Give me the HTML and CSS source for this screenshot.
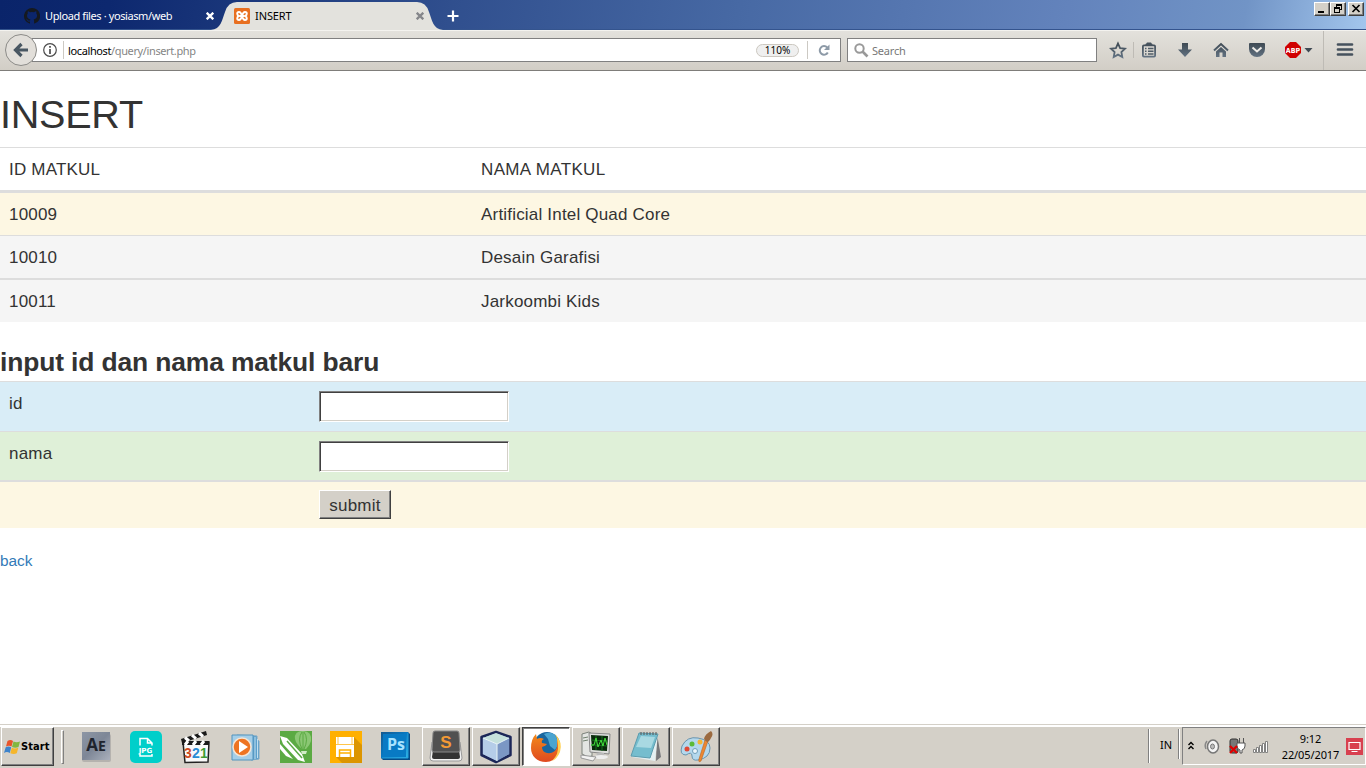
FILE: index.html
```html
<!DOCTYPE html>
<html lang="id">
<head>
<meta charset="utf-8">
<title>INSERT</title>
<link rel="stylesheet" href="styles.css">
</head>
<body>
<header class="titlebar">
  <div class="tab tab-idle">
    <svg class="fav" width="16" height="16" viewBox="0 0 16 16"><path fill="#15191f" d="M8 0a8 8 0 0 0-2.500 15.600c.4 0 .5-.2.5-.4v-1.600c-2 .4-2.600-.7-2.800-1.300-.4-.8-.6-.9-.9-1.100-.5-.3 0-.5.4-.3.5.1.9.8 1.100 1.100.6.9 1.500.7 2.200.5.1-.5.3-.8.5-1C4.600 11.200 3 10.300 3 7.600c0-.9.3-1.600.8-2.200-.2-.6-.2-1.300.1-2.100.7 0 1.500.4 2.100.9a8 8 0 0 1 4 0c.8-.5 1.500-.9 2.200-.9.3.8.2 1.500.1 2.100.5.6.8 1.300.8 2.200 0 2.700-1.700 3.600-3.500 3.900.4.4.5.9.5 1.500v2.200c0 .2.100.500.500.400A8 8 0 0 0 8 0z"/></svg>
    <span class="tab-name name-idle">Upload files · yosiasm/web</span>
    <svg class="tab-x" width="8" height="8" viewBox="0 0 8 8"><path d="M.7.7l6.600 6.600M7.300.7L.7 7.300" stroke="#fff" stroke-width="2.300"/></svg>
  </div>
  <div class="tab tab-active">
    <svg class="tab-shape" width="228" height="30" viewBox="0 0 228 30"><path d="M-4 30C6 29 7 20 10 12Q13 2 22 2H202Q211 2 214 12C217 20 218 29 228 30z" fill="#e3e2dd"/></svg>
    <svg class="fav2" width="16" height="16" viewBox="0 0 16 16"><rect width="16" height="16" rx="1.500" fill="#e86f20"/><path d="M5 4Q3.200 4 3.200 5.700T5 8Q3.200 8.600 3.200 10.300T5 12Q7 12 8 8Q9 4 11 4Q12.800 4 12.800 5.700T11 8Q12.800 8.600 12.800 10.300T11 12Q9 12 8 8Q7 4 5 4z" fill="none" stroke="#fff" stroke-width="1.900"/><path d="M6 8h4" stroke="#fff" stroke-width="2"/></svg>
    <span class="tab-name name-active">INSERT</span>
    <svg class="tab-x" width="8" height="8" viewBox="0 0 8 8"><path d="M.7.7l6.600 6.600M7.300.7L.7 7.300" stroke="#85868a" stroke-width="2.300"/></svg>
  </div>
  <svg class="newtab" width="12" height="12" viewBox="0 0 12 12"><path d="M6 .5v11M.5 6h11" stroke="#fff" stroke-width="2.200"/></svg>
  <div class="winbtns">
    <span class="wb"><svg width="14" height="12"><path d="M3 9h6" stroke="#000" stroke-width="2"/></svg></span>
    <span class="wb"><svg width="14" height="12" shape-rendering="crispEdges"><path d="M5 1h6v2H5zM5 3h1v2H5zM10 3h1v4h-1zM9 6h1v1H9zM3 4h6v2H3zM3 6h1v4H3zM8 6h1v4H8zM3 9h6v1H3z" fill="#000"/></svg></span>
    <span class="wb wb-close"><svg width="14" height="12"><path d="M3.500 2l7 7M10.500 2l-7 7" stroke="#000" stroke-width="1.700"/></svg></span>
  </div>
</header>

<nav class="toolbar">
  <div class="back-btn"><svg width="16" height="16" viewBox="0 0 16 16"><path d="M8.500 2L2.500 8l6 6M3 8h12" fill="none" stroke="#495762" stroke-width="3.200"/></svg></div>
  <div class="urlbar">
    <svg class="info" width="14" height="14" viewBox="0 0 14 14"><circle cx="7" cy="7" r="6.300" fill="none" stroke="#4b4b4b" stroke-width="1.200"/><path d="M7 6v5M7 3v1.800" stroke="#4b4b4b" stroke-width="1.700"/></svg>
    <span class="url-sep"></span>
    <span class="url"><span class="host">localhost</span>/query/insert.php</span>
    <span class="zoom">110%</span>
    <span class="reload-sep"></span>
    <svg class="reload" width="12" height="13" viewBox="0 0 12 13"><path d="M9.200 3.500A4.300 4.300 0 1 0 9.800 8.500" fill="none" stroke="#8d9aa7" stroke-width="2"/><path d="M11.500.5V6H6z" fill="#8d9aa7"/></svg>
  </div>
  <div class="search">
    <svg width="15" height="15" viewBox="0 0 15 15"><circle cx="5.500" cy="5.500" r="4.200" fill="none" stroke="#999" stroke-width="2"/><path d="M8.500 8.500l5 5" stroke="#999" stroke-width="2.600"/></svg>
    <span>Search</span>
  </div>
  <svg class="tools" width="269" height="40" viewBox="0 0 269 40">
    <defs><linearGradient id="ic" gradientUnits="userSpaceOnUse" x1="0" y1="12" x2="0" y2="28"><stop stop-color="#3c4750"/><stop offset="1" stop-color="#657585"/></linearGradient></defs>
    <path d="M21 13.500l2.100 4.600 4.900.6-3.600 3.400.9 5-4.300-2.500-4.300 2.500.9-5-3.600-3.400 4.900-.6z" fill="none" stroke="url(#ic)" stroke-width="1.800"/>
    <path d="M36.500 12v16M226.500 1v39" stroke="#bebbb5"/>
    <rect x="45.900" y="15.400" width="12.200" height="11.200" rx="1" fill="none" stroke="url(#ic)" stroke-width="1.800"/><path d="M48.500 15.500v-1.500q1-.3 1.500-1.500h4q.5 1.200 1.500 1.500v1.500z" fill="#46525d"/><path d="M48 18.500h1.500M51 18.500h5.500M48 21.200h1.500M51 21.200h5.500M48 24h1.500M51 24h5.500" stroke="#505d68" stroke-width="1.400"/>
    <path d="M85 13h6v6.500h4l-7 7.500-7-7.500h4z" fill="url(#ic)"/>
    <path d="M117 20.500l7-6.500 7 6.500" fill="none" stroke="url(#ic)" stroke-width="2"/><path d="M119 21.500l5-4.500 5 4.500v5.500h-3.500v-4.500h-3V27H119z" fill="url(#ic)"/>
    <path d="M153 13h14q1 0 1 1v5a8 8 0 0 1-16 0v-5q0-1 1-1z" fill="url(#ic)"/><path d="M155.500 17.500l4.500 4 4.500-4" fill="none" stroke="#eeece8" stroke-width="2"/>
    <path d="M193 12h6l5 5v6l-5 5h-6l-5-5v-6z" fill="#d00000"/><text class="abp" x="196" y="22.800" text-anchor="middle">ABP</text><path d="M207.500 18h8l-4 4.500z" fill="#3f4a54"/>
    <path d="M241 14.500h14M241 19.500h14M241 24.500h14" stroke="#46525d" stroke-width="2.700" stroke-linecap="round"/>
  </svg>
</nav>

<main class="page">
  <h1 class="title">INSERT</h1>
  <div class="list">
    <div class="row head"><span>ID MATKUL</span><span class="wide">NAMA MATKUL</span></div>
    <div class="row warn"><span>10009</span><span>Artificial Intel Quad Core</span></div>
    <div class="row gray"><span>10010</span><span>Desain Garafisi</span></div>
    <div class="row gray thick"><span>10011</span><span>Jarkoombi Kids</span></div>
  </div>
  <h3 class="subtitle">input id dan nama matkul baru</h3>
  <form class="form">
    <div class="frow info-row"><label>id</label><input class="field" type="text"></div>
    <div class="frow ok-row"><label>nama</label><input class="field" type="text"></div>
    <div class="frow send-row"><span></span><button class="submit" type="button">submit</button></div>
  </form>
  <a class="back">back</a>
</main>

<footer class="taskbar">
  <div class="start"><svg width="17" height="16" viewBox="0 0 17 16"><path d="M3.500 2q3-2 5.500 0L7.500 7.500q-2.500-1.500-5.500 0z" fill="#e8542a"/><path d="M9.500 2.500q3 1.500 6.500 0L14.500 8q-3 1.500-6.500 0z" fill="#82b740"/><path d="M1.700 8.200q3-1.500 5.500 0L5.800 14q-3-2-5.800 0z" fill="#3d83cb"/><path d="M7.800 8.800q3 1.500 6.500 0l-1.500 5.500q-3 1.500-6.500 0z" fill="#f5b62c"/></svg><span>Start</span></div>
  <span class="grip"></span>
  <div class="apps">
    <div class="app"><svg width="34" height="34" viewBox="0 0 34 34"><defs><linearGradient id="ae" x2="1" y2="1"><stop stop-color="#8d96a5"/><stop offset=".5" stop-color="#7e8797"/><stop offset="1" stop-color="#aab0bc"/></linearGradient></defs><rect x="3" y="4" width="29" height="28" rx="2" fill="#b5b2ae"/><rect x="3" y="2" width="28" height="28" fill="url(#ae)"/><text class="ae" x="17" y="21" text-anchor="middle">A<tspan class="ae-small">E</tspan></text></svg></div>
    <div class="app"><svg width="34" height="34" viewBox="0 0 34 34"><rect x="1" y="1" width="32" height="32" rx="5" fill="#00cfca"/><path d="M11 15.500V8.500h7.500l4.500 4.500v2.500M11 24v2h12v-2M18.500 8.500V13H23" fill="none" stroke="#fff" stroke-width="1.500"/><text class="jpg" x="16.500" y="22.500" text-anchor="middle">JPG</text></svg></div>
    <div class="app"><svg width="34" height="34" viewBox="0 0 34 34"><path d="M2 9L27 1l1 4L3 13z" fill="#1a1a1a"/><path d="M6 7.500l4 3.500M13 5.200l4 3.500M20 3l4 3.500" stroke="#fff" stroke-width="3"/><path d="M4 12h26l-1 20-23 .500z" fill="#f9f9f9" stroke="#222" stroke-width="1.500"/><path d="M3 13h27" stroke="#1a1a1a" stroke-width="4"/><path d="M9 11l-3 4M17 11l-3 4M25 11l-3 4" stroke="#fff" stroke-width="3"/><text class="n321" x="5" y="28" fill="#cf4a20">3</text><text class="n321" x="13" y="28" fill="#288bd5">2</text><text class="n321" x="21" y="28" fill="#3e9c35">1</text></svg></div>
    <div class="app"><svg width="34" height="34" viewBox="0 0 34 34"><path d="M8 5l20 1v4l2 1v18l-8 1z" fill="#5b9fcb" stroke="#78a8c8"/><path d="M3 5h21v25H3z" fill="#a4cee8" stroke="#5294be"/><path d="M26 7v22M28.500 9v19" stroke="#c1dff0"/><circle cx="13" cy="17" r="9" fill="#ee7422" stroke="#f5e5d5" stroke-width="1.500"/><path d="M10 11l9 6-9 6z" fill="#fff"/></svg></div>
    <div class="app"><svg width="34" height="34" viewBox="0 0 34 34"><rect x="1" y="1" width="32" height="32" fill="#5baa43"/><path d="M16 9Q15 1 24 1t8 10q-1 4-5 8h-4Q17 14 16 9z" fill="#8bc774"/><path d="M23 2q-5 7 0 17M25 2q5 7 0 17M24 2v17" stroke="#5baa43" fill="none"/><path d="M1 6l7 2 15 16 3 8-7-2L4 14z" fill="#fff"/><path d="M8 11l15 17" stroke="#5baa43" stroke-width="1.500"/><path d="M1 14l13 15-7-3-6-7z" fill="#fff"/><path d="M22 21h6l-1 3h-4z" fill="#d0ebc5"/></svg></div>
    <div class="app"><svg width="34" height="34" viewBox="0 0 34 34"><rect x="1" y="1" width="32" height="32" fill="#ffb000"/><path d="M25 7l8 8v18H13l-6-6z" fill="#dc9500"/><path d="M9 7h16v9H9z" fill="#fff"/><path d="M7 7h18v20H7z" fill="#fff"/><path d="M9 7v7M23 7v7M7 14.500h18" stroke="#ffc54a"/><path d="M10.500 27v-7h11v7M10 23h12" fill="none" stroke="#ffb000" stroke-width="1.500"/></svg></div>
    <div class="app"><svg width="34" height="34" viewBox="0 0 34 34"><defs><linearGradient id="ps" x2="1" y2="1"><stop stop-color="#15598f"/><stop offset=".5" stop-color="#0879c3"/><stop offset="1" stop-color="#31b7e8"/></linearGradient></defs><path d="M2 2h27l2 2v26H4l-2-2z" fill="#064c88"/><path d="M2 2h27v26H2z" fill="url(#ps)"/><rect x="4" y="4" width="23" height="23" fill="#087ac4"/><path d="M29 3v25H3" fill="none" stroke="#25a0dc"/><text class="ps" x="17" y="20" text-anchor="middle">Ps</text></svg></div>
    <div class="app btn"><svg width="34" height="34" viewBox="0 0 34 34"><path d="M3 12L1 28q0 3 3 3h26q3 0 3-3l-2-16z" fill="#f1f1f1" stroke="#999"/><path d="M4 20l-1 7q0 2 2 2h24q2 0 2-2l-1-7z" fill="#333"/><path d="M6 1h22q2 0 2 2l1 17q0 2-2 2H5q-2 0-2-2L4 3q0-2 2-2z" fill="#515151" stroke="#888"/><text class="sub" x="17" y="17.500" text-anchor="middle">S</text></svg></div>
    <div class="app btn"><svg width="34" height="34" viewBox="0 0 34 34"><path d="M17 2l14.500 5v18L17 32 2.500 25V7z" fill="#9eb8dc" stroke="#1c2758" stroke-width="2.500" stroke-linejoin="round"/><path d="M17 3l13 5-12 6L4 8z" fill="#c5e1dc"/><path d="M18 14l12-6v16l-12 7z" fill="#7b97c4"/><path d="M4 8l14 6v17L4 24z" fill="#b5cde8"/><path d="M4 8l14 6 12-6M18 14v17" fill="none" stroke="#e9f5f5"/></svg></div>
    <div class="app btn pressed"><svg width="34" height="34" viewBox="0 0 34 34"><defs><linearGradient id="ff" y2="1" x2="0"><stop stop-color="#f38a1a"/><stop offset="1" stop-color="#df4920"/></linearGradient></defs><circle cx="18" cy="15" r="13" fill="#19669f"/><path d="M15 4q10-4 13 5 2 6-2 11l-5-4-2-7z" fill="#4aa4d0"/><path d="M28 7q5 9 1 17-4 8-12 8C8 32 2 26 2 18Q2 9 7 4l1 5q3-2 7 0-3 1-2 4l5 1q-1 2-5 3 0 5 5 6 8 1 10-6z" fill="url(#ff)"/><path d="M26 4q8 8 5 18-3 7-8 9 7-7 6-16 0-6-3-11z" fill="#ffd052"/></svg></div>
    <div class="app btn"><svg width="34" height="34" viewBox="0 0 34 34"><path d="M3 4l7-2 3 2v22l-4 1-6-3z" fill="#e3e5e2" stroke="#7c827b"/><path d="M4 8l5-1M4 11l5-1" stroke="#71806e"/><path d="M10 3l21 1-1 20-19-2z" fill="#dedfdd" stroke="#888"/><path d="M12 5l17 1-1 15-15-1z" fill="#092a0b"/><path d="M12 10l17 1M12 15l16 1M17 6v14M23 6v15" stroke="#196c20"/><path d="M12 15h3l2-7 2 9 3-7 2 6 2-8 2 7" fill="none" stroke="#42e43c"/><path d="M18 23h7l1 4h-9z" fill="#bbb"/><ellipse cx="22" cy="27" rx="7" ry="2" fill="#eee"/><path d="M2 25l15 2-3 4-12-3z" fill="#f2f2f2" stroke="#999"/></svg></div>
    <div class="app btn"><svg width="34" height="34" viewBox="0 0 34 34"><path d="M28 4l4 23-5 4z" fill="#77777a"/><path d="M11 3l18 1-3 27-23-4z" fill="#e4eff1"/><path d="M10 3l19 1-8 24-19-2z" fill="#75bdce" stroke="#5c9cae"/><path d="M12 6l14 1-4 11-15-1z" fill="#a9d9e2"/><path d="M12 2v3M15 2v3M18 2v3M21 2v3M24 2v3M27 2v3" stroke="#555"/></svg></div>
    <div class="app btn"><svg width="34" height="34" viewBox="0 0 34 34"><path d="M3 16Q8 6 19 8q12 2 12 10 0 10-12 12-6 1-6-4t-6-1q-7 0-4-9z" fill="#b4d8ed" stroke="#6994ae"/><circle cx="13" cy="14" r="2.500" fill="#5bba37"/><circle cx="21" cy="12" r="2.500" fill="#f5b634"/><circle cx="8" cy="19" r="2.500" fill="#df4936"/><circle cx="16" cy="21" r="2.500" fill="#ebf5fa" stroke="#719fba"/><path d="M26 10l3 1-7 20q-3 2-2-2z" fill="#ed8731" stroke="#b76523" stroke-width=".6"/><path d="M25 9q1-5 7-8 3 3 0 7-2 4-4 4z" fill="#9b6a40"/></svg></div>
  </div>
  <span class="edge"></span>
  <span class="lang">IN</span>
  <span class="edge2"></span>
  <div class="tray">
    <svg width="86" height="34" viewBox="0 0 86 34"><path d="M5.500 16l2.500-2.500 2.500 2.500M5.500 20l2.500-2.500 2.500 2.500" fill="none" stroke="#000" stroke-width="1.400"/><ellipse cx="30" cy="17.500" rx="5.500" ry="6.500" fill="#f4f4f4" stroke="#777" stroke-width="1.500"/><ellipse cx="29.500" cy="17.500" rx="2" ry="2.500" fill="#bbb" stroke="#777"/><path d="M24 12q-3 4-1 8" fill="none" stroke="#888" stroke-width="1.500"/><rect x="47" y="10" width="8" height="14" rx="2" fill="#777" stroke="#333"/><path d="M56.500 9v5M60.500 9v5M54 14h8v3q0 3-3 4v3h-2v-3q-3-1-3-4z" fill="#fff" stroke="#555"/><path d="M47 17l7 7M54 17l-7 7" stroke="#e00000" stroke-width="2.300"/><path d="M70.500 23.500v-3h2v3zM73.500 23.500v-5h2v5zM76.500 23.500v-7h2v7zM79.500 23.500v-9h2v9zM82.500 23.500v-11h2v11z" fill="#fff" stroke="#777" stroke-width=".9"/></svg>
    <div class="clock"><span class="time">9:12</span><span class="date">22/05/2017</span></div>
    <svg class="screen" width="17" height="17" viewBox="0 0 17 17"><rect width="17" height="17" fill="#d8404f"/><path d="M3 4.500h11v7H3zM5.500 13.500h6" fill="none" stroke="#fff" stroke-width="1.200"/></svg>
  </div>
</footer>
</body>
</html>
```

FILE: styles.css
```css
* { box-sizing: border-box; }
body {
  margin: 0; width: 1366px; height: 768px; overflow: hidden;
  display: flex; flex-direction: column;
  background: #fff; color: #333;
  font-family: "Liberation Sans", Arial, sans-serif;
}
svg { display: block; flex: none; }

.titlebar {
  height: 30px; flex: none; display: flex; align-items: stretch;
  background: linear-gradient(100deg, #0a246a 0, #0d286f 8%, #304f8e 33%, #4769a4 54%, #6383bc 78%, #7194c6 91%, #a3c6ed 100%);
  box-shadow: inset 0 -1px #34548e;
  font: 11px "Noto Sans", sans-serif;
}
.tab { display: flex; align-items: center; padding-top: 2px; }
.tab-idle { width: 215px; padding-left: 24px; color: #fff; }
.tab-active { position: relative; width: 228px; padding-left: 19px; color: #000; }
.tab-shape { position: absolute; left: 0; top: 0; overflow: visible; }
.fav2, .name-active, .tab-active .tab-x { position: relative; }
.tab-name { white-space: nowrap; margin: -1px 0 0 5px; }
.name-idle { width: 161px; letter-spacing: -.4px; }
.name-active { width: 161px; letter-spacing: -.1px; }
.newtab { margin: 10px 0 0 4px; }
.winbtns { margin-left: auto; display: flex; padding: 2px 2px 0 0; height: 16px; }
.wb { width: 16px; height: 14px; background: #d4d0c8; border: 1px solid; border-color: #fff #404040 #404040 #fff; box-shadow: inset -1px -1px #808080; }
.wb-close { margin-left: 2px; }

.toolbar {
  height: 41px; flex: none; display: flex; align-items: center; padding-bottom: 1px;
  background: linear-gradient(#e3e1dc, #d2cec6);
  border-top: 1px solid #f4f3ef; border-bottom: 1px solid #7f7d7a;
  font: 11px "Noto Sans", sans-serif;
}
.back-btn {
  width: 32px; height: 32px; margin-left: 5px; flex: none; z-index: 1;
  display: flex; align-items: center; justify-content: center;
  border: 1px solid #8c8b88; border-radius: 50%; background: #e2dfda;
}
.urlbar {
  width: 809px; height: 24px; margin-left: -5px; padding-left: 10px;
  display: flex; align-items: center; background: #fff; border: 1px solid #808080;
}
.url-sep, .reload-sep { width: 1px; height: 18px; background: #ccc9c3; }
.url-sep { margin-left: 6px; }
.url { margin-left: 4px; color: #858585; letter-spacing: -.38px; }
.host { color: #000; }
.zoom { width: 43px; height: 13px; margin-left: auto; border: 1px solid #ccc8c0; border-radius: 7px; background: #efefef; color: #000; font-size: 10px; line-height: 11px; text-align: center; }
.reload-sep { margin-left: 8px; }
.reload { margin: 0 10px 0 10px; }
.search { width: 250px; height: 24px; margin-left: 6px; padding-left: 6px; display: flex; align-items: center; gap: 3px; background: #fff; border: 1px solid #808080; color: #777; letter-spacing: -.2px; }
.abp { font: bold 7px "DejaVu Sans Condensed", sans-serif; fill: #fff; }

.page { flex: 1; min-height: 0; font-size: 17px; }
.title { margin: 0; padding-top: 21px; height: 76px; font-size: 39.6px; font-weight: 500; line-height: 44px; letter-spacing: -.25px; }
.row { display: grid; grid-template-columns: 472px 1fr; line-height: 24px; letter-spacing: .19px; border-top: 1px solid #ddd; }
.row span, .frow label { padding-left: 9px; }
.head { height: 43px; padding-top: 10px; }
.wide { letter-spacing: .36px; }
.warn { height: 45px; padding-top: 10px; border-top-width: 3px; background: #fdf7e3; }
.gray { height: 43px; padding-top: 10px; background: #f5f5f5; }
.thick { height: 44px; border-top-width: 2px; }
.subtitle { margin: 0; height: 59px; padding-top: 26px; font-size: 26.4px; line-height: 29px; letter-spacing: -.12px; }
.frow { display: grid; grid-template-columns: 319px 1fr; align-items: start; justify-items: start; border-top: 1px solid #ddd; line-height: 24px; letter-spacing: .19px; }
.info-row { height: 50px; padding-top: 9px; background: #d9edf7; }
.ok-row { height: 49px; padding-top: 9px; background: #dff0d8; }
.send-row { height: 48px; padding-top: 8px; border-top-width: 2px; background: #fdf7e3; }
.frow label { margin-top: 1px; }
.field { width: 190px; height: 31px; margin: 0; background: #fff; border: 1px solid; border-color: #808080 #fff #fff #808080; border-radius: 0; box-shadow: inset 1px 1px #404040, inset -1px -1px #d4d0c8; outline: none; }
.submit { width: 72px; height: 29px; padding: 2px 0 0; border: 1px solid; border-color: #fff #404040 #404040 #fff; border-radius: 0; box-shadow: inset -1px -1px #808080; background: #d4d0c8; color: #333; font: 17px "Liberation Sans", Arial, sans-serif; letter-spacing: .25px; }
.back { display: block; margin-top: 22px; line-height: 22px; font-size: 15.4px; color: #337ab7; }

.taskbar { height: 44px; flex: none; display: flex; align-items: flex-start; padding-top: 2px; background: #d4d0c8; border-top: 1px solid #d4d0c8; box-shadow: inset 0 2px #fff; color: #000; font: 11px "Noto Sans", sans-serif; }
.start { width: 53px; height: 39px; margin-left: 1px; padding-left: 2px; display: flex; align-items: center; border: 1px solid; border-color: #fff #404040 #404040 #fff; box-shadow: inset -1px -1px #808080; font: bold 11px "DejaVu Sans Condensed", sans-serif; letter-spacing: .1px; }
.grip { width: 3px; height: 34px; margin: 3px 0 0 7px; border: 1px solid; border-color: #fff #808080 #808080 #fff; }
.apps { display: flex; gap: 2px; margin-left: 8px; }
.app { width: 48px; height: 39px; display: flex; align-items: center; justify-content: center; }
.btn { border: 1px solid; border-color: #fff #404040 #404040 #fff; box-shadow: inset -1px -1px #808080; }
.pressed { background: #fff; border-color: #404040 #fff #fff #404040; box-shadow: inset 1px 1px #808080; }
.ae { font: bold 17px "Open Sans", sans-serif; fill: #20242d; }
.ae-small { font-size: 14px; }
.jpg { font: bold 7px "DejaVu Sans", sans-serif; fill: #fff; }
.n321 { font: bold 14px "Liberation Sans", sans-serif; }
.ps { font: bold 16px "Open Sans", sans-serif; fill: #a8e3ff; }
.sub { font: bold 17px "Liberation Sans", sans-serif; fill: #f39a35; }
.edge, .edge2 { width: 2px; height: 34px; margin-top: 2px; border-left: 1px solid #808080; border-right: 1px solid #fff; }
.edge { margin-left: 428px; }
.edge2 { height: 30px; }
.lang { width: 28px; padding: 10px 0 0 10px; }
.tray { width: 184px; height: 38px; flex: none; margin-left: 2px; display: flex; align-items: center; border: 1px solid; border-color: #808080 #fff #fff #808080; }
.clock { width: 83px; padding-top: 1px; display: flex; flex-direction: column; text-align: center; line-height: 16px; letter-spacing: -.1px; }
.date { white-space: nowrap; }
.screen { margin-left: -6px; }
```
